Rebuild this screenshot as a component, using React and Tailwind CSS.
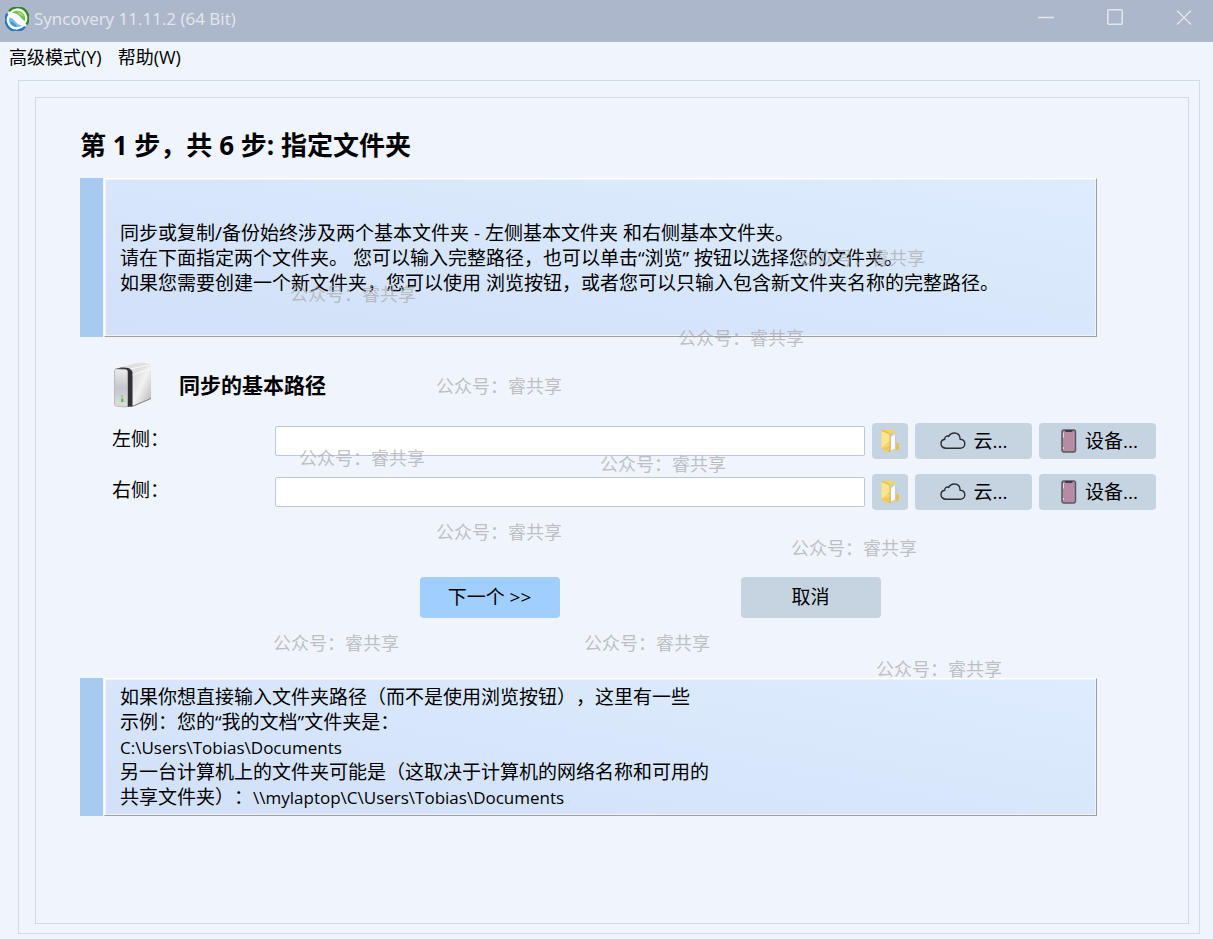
import { useState } from 'react';

const watermarks = [
  'left-[799px] top-[245px]',
  'left-[290px] top-[281px]',
  'left-[678px] top-[325px]',
  'left-[436px] top-[373px]',
  'left-[299px] top-[445px]',
  'left-[600px] top-[451px]',
  'left-[436px] top-[519px]',
  'left-[791px] top-[535px]',
  'left-[273px] top-[630px]',
  'left-[584px] top-[630px]',
  'left-[876px] top-[656px]',
];

function AppLogo() {
  return (
    <svg className="h-6 w-6 shrink-0" viewBox="0 0 24 24" fill="none">
      <circle cx="12" cy="12" r="11" fill="#fff" />
      <path d="M4 4.200A11 11 0 0 1 21.500 17.500" stroke="#2a8a1c" strokeWidth="2.200" />
      <path d="M20 19.800A11 11 0 0 1 2.500 6.500" stroke="#1f78c0" strokeWidth="2.200" />
      <path d="M7 5.500c4-2.800 9.500-2 12 2 1.200 2 1.400 4.500.8 6.500C17.500 12.800 16 10.500 14 8.500 12 6.700 9.500 6 7 5.500z" fill="#6fc045" />
      <path d="M12 4.500c3.200.3 6 2.300 7.200 5.200C16.200 9 13.700 7.200 12 4.500z" fill="#a9dc85" />
      <path d="M4.500 10.500c3 .3 4.500 2.500 6.500 4.700 1.700 1.800 3.700 2.800 5.800 3.300-4 2.800-9.300 2-11.800-2-1.200-2-1.200-4-.5-6z" fill="#7db9e6" />
      <path d="M5 14.500c3.200.5 5.500 2.300 7 5.200-3.200-.2-6-2.200-7-5.200z" fill="#3a92d2" />
      <path d="M6 7.500c4-.3 6 1.500 8 4.500 1.500 2.300 3 3.500 5 4.500" stroke="#fff" strokeWidth="1.500" />
    </svg>
  );
}

function DriveIcon() {
  return (
    <svg className="h-12 w-10" viewBox="0 0 40 48">
      <defs>
        <linearGradient id="side" x1="0" y1="0" x2="1" y2="1">
          <stop offset="0" stopColor="#d4d4d4" />
          <stop offset=".5" stopColor="#f1f1f1" />
          <stop offset="1" stopColor="#b5b5b5" />
        </linearGradient>
        <linearGradient id="front" x1="0" y1="0" x2="0" y2="1">
          <stop offset="0" stopColor="#ececec" />
          <stop offset=".5" stopColor="#c4c6ca" />
          <stop offset="1" stopColor="#dedede" />
        </linearGradient>
      </defs>
      <path d="M15 45l5 1 19-8v-3z" fill="#777" />
      <path d="M3 8L23 2.500q9-1.500 14 .5 2 1 2 3L20 11z" fill="#e0e0e0" />
      <path d="M20 11L39 4.500V36q0 1-1 1.500L20 45z" fill="url(#side)" />
      <path d="M3 8L9 6.500q8-.5 10 2l1.500 2.500V45l-5 1V11q0-2-3-2.500z" fill="#303134" />
      <path d="M18 8l19-4M20.500 14L38 8" stroke="#fff" strokeWidth="1" opacity=".8" />
      <path d="M2.500 10q0-2 2-2l9 .5q2 .2 2 2V44q0 2-2 2l-9-.8q-2-.2-2-2z" fill="url(#front)" stroke="#aaa" strokeWidth=".7" />
      <path d="M9 34h2v2.500H9z" fill="#b6b6b6" />
      <path d="M9 37.500h2.500V41H9z" fill="#54c938" />
    </svg>
  );
}

function FolderIcon() {
  return (
    <svg className="h-6 w-6" viewBox="0 0 24 24">
      <path d="M4 1l13 1v5l2 10.500V14l2 .5v5.500l-2 1-8 1z" fill="#f4cf4a" />
      <path d="M8 .5l9 1.500v6l-5-3z" fill="#f8dc3f" />
      <path d="M10.500 5l4.500-1.500 3.500 2.500v14l-6 1.500z" fill="#c6ccd6" />
      <path d="M13 8l4-3v14.500l-4 2z" fill="#f8fafc" />
      <path d="M18.500 14l2 .5v6l-2 1z" fill="#eabd3c" />
      <path d="M3.500 1.500l7.500 3q1 .5 1 2V22.500q0 1-1.500.5l-6-3q-1-.5-1-1.500z" fill="#fbe68d" />
      <path d="M3.500 19l7.500-6.500 1 .5v9.500q0 1-1.500.5l-6-3q-1-.5-1-1z" fill="#efcb56" />
      <path d="M3.500 19l8-2.500v-3z" fill="#f6dd75" />
      <path d="M3.500 1.500l7.500 3q1 .5 1 2V23" fill="none" stroke="#d9ab3a" strokeWidth=".7" />
    </svg>
  );
}

function CloudIcon() {
  return (
    <svg className="h-[18px] w-[26px]" viewBox="0 0 26 18" fill="none" stroke="#2b2d33" strokeWidth="1.400" strokeLinejoin="round">
      <path d="M6 16.200C3 16.200 1 14.200 1 11.700 1 9.200 2.800 7.600 4.800 7.300 4.400 4.800 6.800 3.400 8.700 4.400 10 2 12 1 14.200 1c3.700 0 5.900 2.600 5.900 6.200 2.800.1 4.700 2 4.700 4.500 0 2.600-2 4.500-4.600 4.500z" />
    </svg>
  );
}

function PhoneIcon() {
  return (
    <svg className="h-6 w-4" viewBox="0 0 16 24">
      <rect x="1" y="1" width="13.500" height="22" rx="2" fill="#b58ca3" stroke="#555a63" strokeWidth="1.500" />
      <path d="M4 1h7.500v1q0 1-1 1H5q-1 0-1-1z" fill="#3c4048" />
      <path d="M2.500 3.500v5M2.500 18v2" stroke="#e6d8e0" strokeWidth="1" />
    </svg>
  );
}

function InfoPanel({ children, className }) {
  return (
    <div className="ml-11 mr-[91px] flex gap-px">
      <div className="w-[23px] shrink-0 bg-[#a6caf0]" />
      <div
        className={`flex-1 border border-t-white border-l-white border-r-[#9f9f9f] border-b-[#9f9f9f] bg-linear-[10deg,#d2e0f9,#d6e5fa_40%,#dfecff] pl-[15px] text-[19px] leading-[25px] shadow-[inset_0_0_0_1px_#eef3fa] ${className}`}
      >
        {children}
      </div>
    </div>
  );
}

function PathRow({ id, label, value, onChange }) {
  const button = 'flex h-9 items-center justify-center rounded-sm bg-[#c6d4e1]';

  return (
    <div className="flex items-center gap-[7px]">
      <label htmlFor={id} className="w-[156px] shrink-0 pb-1 leading-7">
        {label}
      </label>
      <input
        id={id}
        type="text"
        value={value}
        onChange={(e) => onChange(e.target.value)}
        className="h-[30px] min-w-0 flex-1 rounded-xs border border-[#b9c8dc] bg-white px-2 outline-none"
      />
      <button type="button" aria-label="浏览" className={`${button} w-9`}>
        <FolderIcon />
      </button>
      <button type="button" className={`${button} w-[117px] gap-2`}>
        <CloudIcon />
        云...
      </button>
      <button type="button" className={`${button} w-[117px] gap-2 pl-1`}>
        <PhoneIcon />
        设备...
      </button>
    </div>
  );
}

export default function App() {
  const [left, setLeft] = useState('');
  const [right, setRight] = useState('');

  return (
    <div
      lang="zh-CN"
      className="relative flex min-h-screen flex-col bg-[#eff4fd] font-['Open_Sans','Noto_Sans_CJK_SC',sans-serif] text-[19px] text-black [text-spacing-trim:space-all]"
    >
      {/* Title bar */}
      <header className="flex h-[42px] items-center justify-between bg-[#adb7cb] pl-[5px] pr-[21px] text-[#e3e7ee]">
        <div className="flex items-center gap-[5px] pb-1">
          <AppLogo />
          <span className="text-[17px] leading-6">Syncovery 11.11.2 (64 Bit)</span>
        </div>
        <div className="flex gap-[53px] pb-2">
          <button type="button" aria-label="最小化">
            <svg className="h-4 w-4" viewBox="0 0 16 16" stroke="currentColor" strokeWidth="1.500">
              <path d="M0 8.500h16" />
            </svg>
          </button>
          <button type="button" aria-label="最大化">
            <svg className="h-4 w-4" viewBox="0 0 16 16" fill="none" stroke="currentColor" strokeWidth="1.500">
              <rect x=".8" y=".8" width="14.400" height="14.400" rx="1" />
            </svg>
          </button>
          <button type="button" aria-label="关闭">
            <svg className="h-4 w-4" viewBox="0 0 16 16" stroke="currentColor" strokeWidth="1.300">
              <path d="M1 1.500l14 14M15 1.500l-14 14" />
            </svg>
          </button>
        </div>
      </header>

      {/* Menu */}
      <nav className="flex h-[38px] gap-4 px-[9px] pt-px text-lg leading-7">
        <button type="button" className="self-start">高级模式(Y)</button>
        <button type="button" className="self-start">帮助(W)</button>
      </nav>

      <main className="mb-[5px] ml-[18px] mr-[13px] flex flex-1 flex-col border border-[#cfdce8] px-4 pt-4 pb-[9px] pr-2.5">
        <div className="flex-1 border border-[#cfdce8] pt-[29px]">
          <h1 className="mb-[15px] pl-11 text-[26px] font-bold leading-9">第 1 步，共 6 步: 指定文件夹</h1>

          <InfoPanel className="pt-[42px] pb-10">
            <p>同步或复制/备份始终涉及两个基本文件夹 - 左侧基本文件夹 和右侧基本文件夹。</p>
            <p>请在下面指定两个文件夹。 您可以输入完整路径，也可以单击“浏览” 按钮以选择您的文件夹。</p>
            <p>如果您需要创建一个新文件夹，您可以使用 浏览按钮，或者您可以只输入包含新文件夹名称的完整路径。</p>
          </InfoPanel>

          <form className="pl-[76px] pt-6" onSubmit={(e) => e.preventDefault()}>
            <div className="mb-3.5 flex items-center gap-[27px]">
              <DriveIcon />
              <h2 className="text-[21px] font-bold leading-7">同步的基本路径</h2>
            </div>

            <div className="flex flex-col gap-[15px] pr-8">
              <PathRow id="left-path" label="左侧：" value={left} onChange={setLeft} />
              <PathRow id="right-path" label="右侧：" value={right} onChange={setRight} />
            </div>

            <div className="mb-[60px] mt-[67px] flex justify-center gap-[181px]">
              <button type="submit" className="h-[41px] w-[140px] rounded-sm bg-[#a0cfff]">
                下一个 &gt;&gt;
              </button>
              <button type="button" className="h-[41px] w-[140px] rounded-sm bg-[#c6d4e1]">
                取消
              </button>
            </div>
          </form>

          <InfoPanel className="pt-1.5 pb-[5px]">
            <p>如果你想直接输入文件夹路径（而不是使用浏览按钮），这里有一些</p>
            <p>示例：您的“我的文档”文件夹是：</p>
            <p className="text-[17px]">C:\Users\Tobias\Documents</p>
            <p>另一台计算机上的文件夹可能是（这取决于计算机的网络名称和可用的</p>
            <p>
              共享文件夹）：
              <span className="text-[17px]">\\mylaptop\C\Users\Tobias\Documents</span>
            </p>
          </InfoPanel>
        </div>
      </main>

      {watermarks.map((position) => (
        <span
          key={position}
          className={`pointer-events-none absolute whitespace-nowrap text-lg leading-[26px] text-[#a8a8a8]/70 ${position}`}
        >
          公众号：睿共享
        </span>
      ))}
    </div>
  );
}
